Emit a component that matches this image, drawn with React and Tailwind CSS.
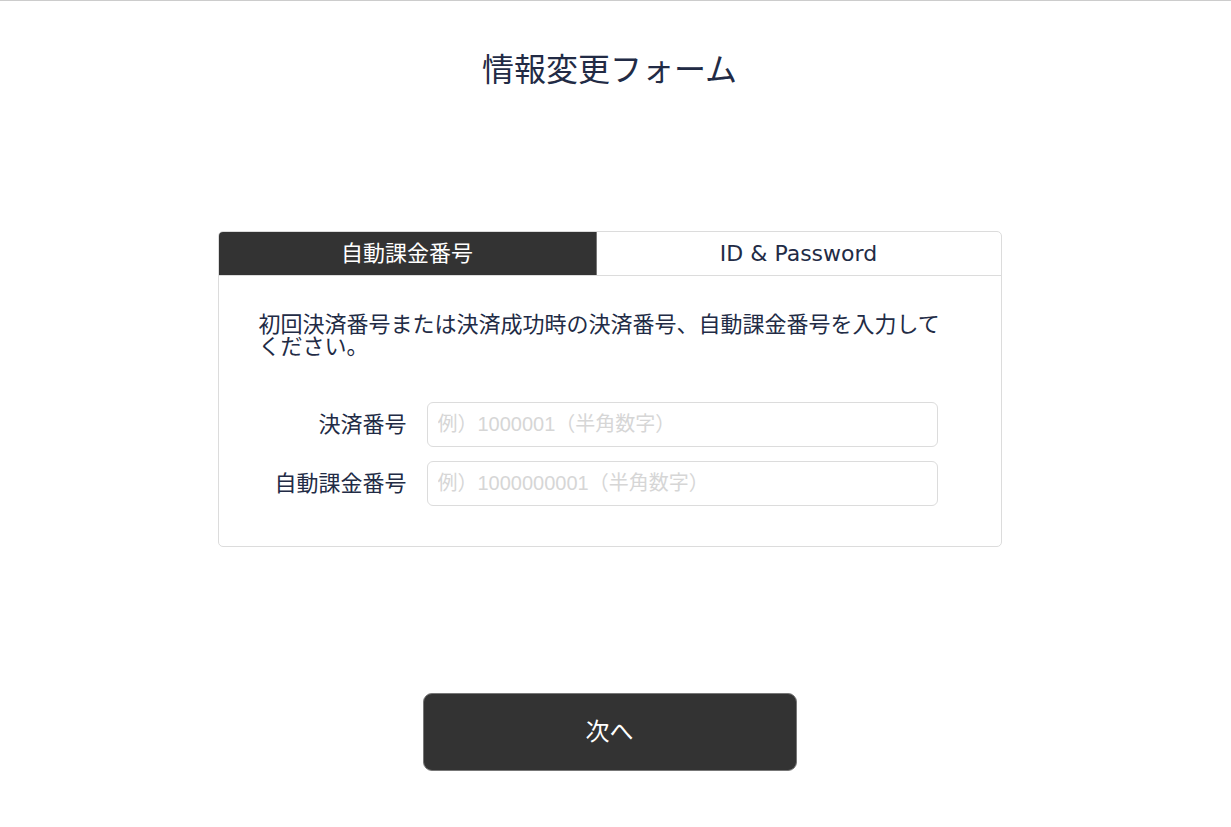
import React, { useState } from 'react';

const font = { fontFamily: '"DejaVu Sans", "Noto Sans CJK JP", sans-serif' };
const inputFont = { fontFamily: '"Liberation Sans", "Noto Sans CJK JP", sans-serif' };

export default function App() {
  const [tab, setTab] = useState('auto');

  return (
    <div
      className="min-h-[827px] w-full border-t border-[#cccccc] bg-white pr-[12px] text-[#222b45]"
      style={font}
    >
      <h1 className="pt-[45px] text-center text-[32px] font-normal leading-[48px]">
        情報変更フォーム
      </h1>

      <div className="mx-auto mt-[137px] w-[784px] rounded-[5px] border border-[#dcdcdc]">
        <div className="flex h-[44px] border-b border-[#dcdcdc]">
          <button
            onClick={() => setTab('auto')}
            className="flex w-[378px] items-center justify-center rounded-tl-[4px] border-r border-[#777] bg-[#333333] text-[22px] text-white"
          >
            自動課金番号
          </button>
          <button
            onClick={() => setTab('id')}
            className="flex flex-1 items-center justify-center text-[22px] text-[#222b45]"
          >
            ID &amp; Password
          </button>
        </div>

        <div className="px-[40px] pt-[38px] pb-[40px]">
          <p className="text-[22px] leading-[22px]">
            初回決済番号または決済成功時の決済番号、自動課金番号を入力してください。
          </p>

          <div className="mt-[44px] grid grid-cols-[148px_511px] items-center gap-x-[20px] gap-y-[14px]">
            <label className="text-right text-[22px]">決済番号</label>
            <input
              className="h-[45px] rounded-[6px] border border-[#dcdcdc] px-[10px] text-[20px] outline-none placeholder:text-[#d6d6d6]"
              style={inputFont}
              placeholder="例）1000001（半角数字）"
            />
            <label className="text-right text-[22px]">自動課金番号</label>
            <input
              className="h-[45px] rounded-[6px] border border-[#dcdcdc] px-[10px] text-[20px] outline-none placeholder:text-[#d6d6d6]"
              style={inputFont}
              placeholder="例）1000000001（半角数字）"
            />
          </div>
        </div>
      </div>

      <div className="mt-[146px] flex justify-center">
        <button className="h-[78px] w-[374px] rounded-[9px] border border-[#777] bg-[#333333] text-[24px] text-white">
          次へ
        </button>
      </div>
    </div>
  );
}
